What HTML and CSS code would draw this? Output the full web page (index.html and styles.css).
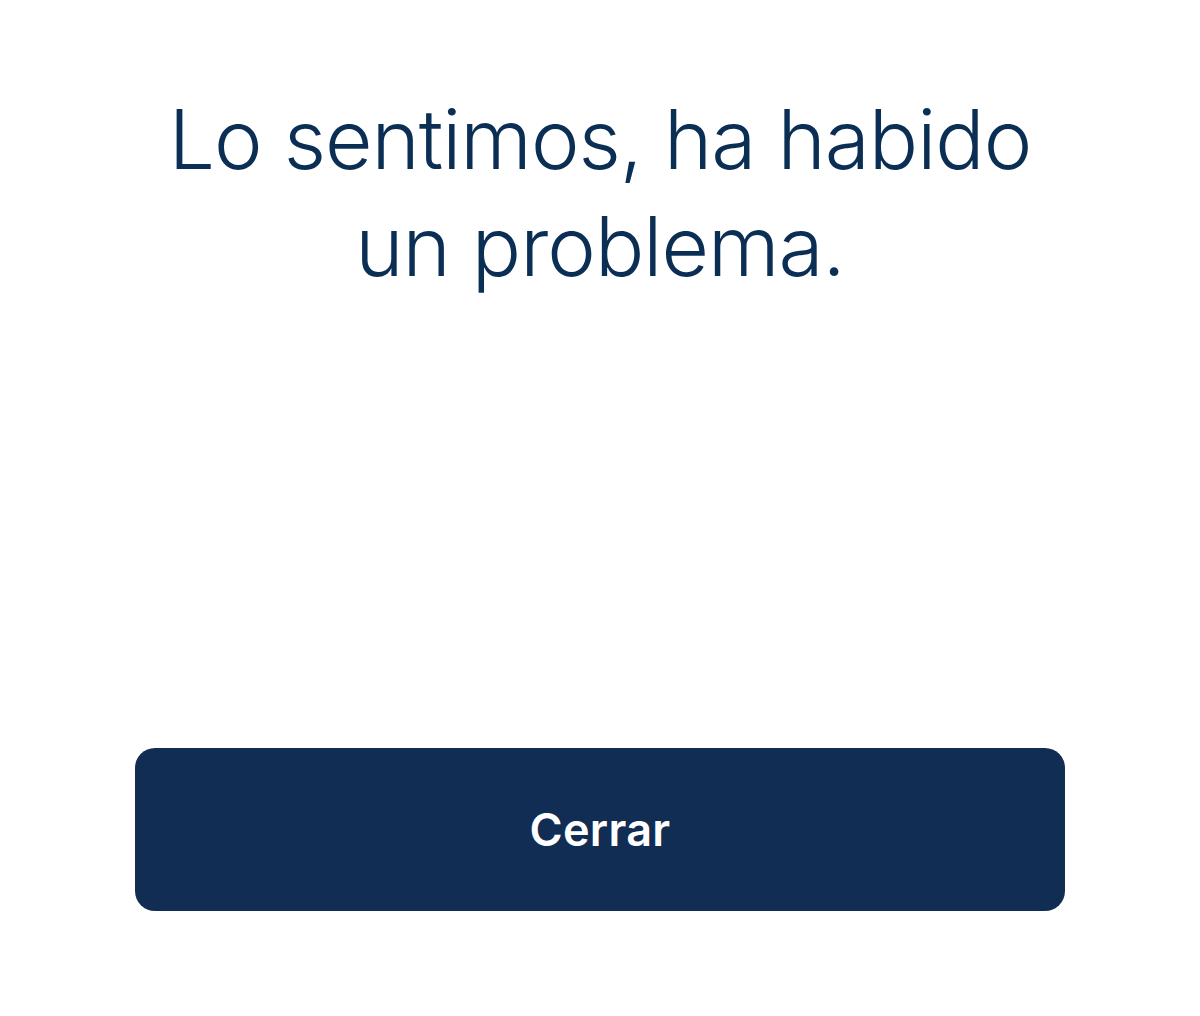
FILE: index.html
```html
<!DOCTYPE html>
<html lang="es">
<head>
  <meta charset="UTF-8">
  <title>Error</title>
  <meta name="viewport" content="width=device-width, initial-scale=1.0">
  <link rel="stylesheet" href="styles.css">
</head>
<body>

  <div class="screen">
    <h1 class="title">Lo sentimos, ha habido<br>un problema.</h1>
    <button class="close-btn">Cerrar</button>
  </div>

</body>
</html>
```

FILE: styles.css
```css
body {
  margin: 0;
  background: #fff;
  font-family: Inter, "Noto Sans", sans-serif;
}

.screen {
  display: flex;
  flex-direction: column;
  align-items: center;
  height: 1016px;
}

.title {
  margin: 86px 0 0;
  font-size: 82px;
  font-weight: 300;
  line-height: 107px;
  letter-spacing: -1px;
  text-align: center;
  color: #0b2e55;
}

.close-btn {
  margin-top: auto;
  margin-bottom: 105px;
  width: 930px;
  height: 163px;
  border: none;
  border-radius: 20px;
  background: #112d53;
  color: #fff;
  font-family: Inter, "Noto Sans", sans-serif;
  font-size: 45px;
  font-weight: 600;
  letter-spacing: 0.3px;
  cursor: pointer;
}
```
